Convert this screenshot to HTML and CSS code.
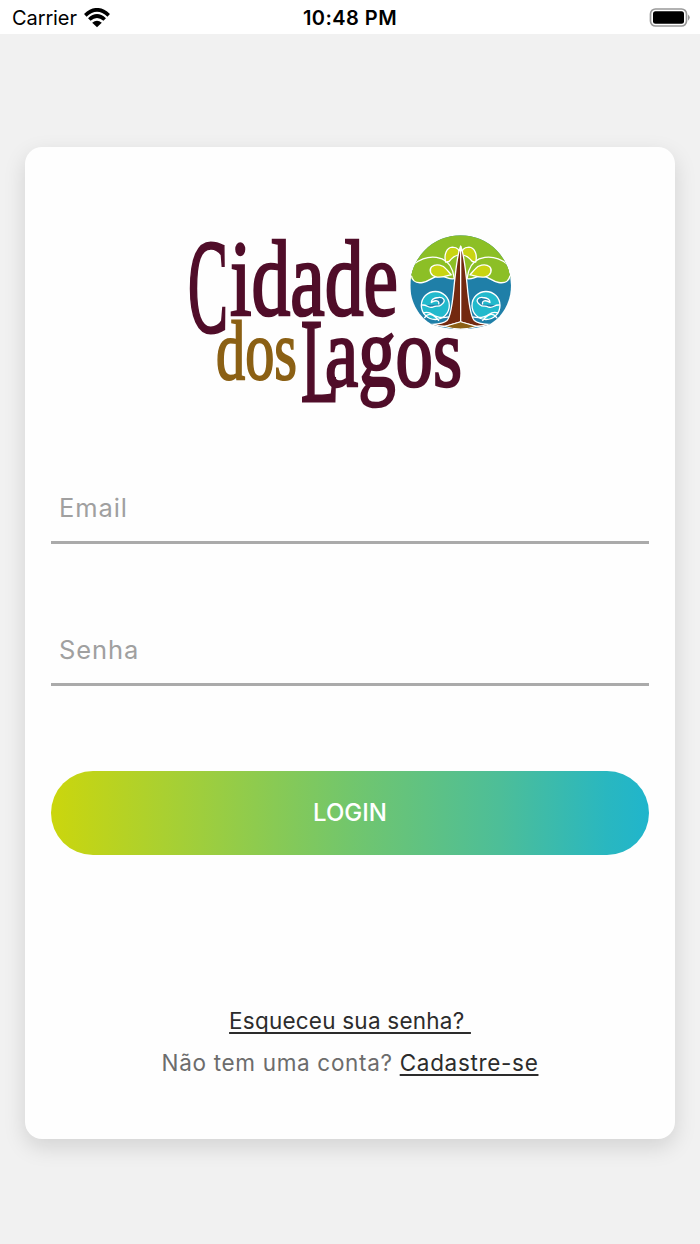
FILE: index.html
```
<!DOCTYPE html>
<html lang="pt-BR">
<head>
  <meta charset="UTF-8">
  <meta name="viewport" content="width=device-width, initial-scale=1.0">
  <title>Cidade dos Lagos - Login</title>
  <link rel="stylesheet" href="styles.css">
</head>
<body>
  <header class="status-bar">
    <div class="carrier">
      <span>Carrier</span>
      <svg class="wifi" viewBox="0 0 26 20">
        <g fill="none" stroke="#000" stroke-width="3.7">
          <path d="M1.3 7.3Q13-3.6 24.7 7.3"/>
          <path d="M5.3 11.5Q13 4.5 20.7 11.5"/>
        </g>
        <path d="M8.2 14.8Q13 10.6 17.8 14.8L13 19.3Z"/>
      </svg>
    </div>
    <div class="time">10:48 PM</div>
    <svg class="battery" viewBox="0 0 42 20">
      <rect x="1.5" y="1" width="36" height="17" rx="5" fill="none" stroke="#999" stroke-width="1.7"/>
      <rect x="4" y="3.3" width="31" height="12.4" rx="2.5"/>
      <path d="M39 6.5Q42.5 9.5 39 12.8Z" fill="#999"/>
    </svg>
  </header>

  <main class="card">
    <svg class="logo" viewBox="180 225 340 190" role="img" aria-label="Cidade dos Lagos">
      <g class="logo-text">
        <text class="logo-cap" x="188" y="332" font-size="134" textLength="40" lengthAdjust="spacingAndGlyphs">C</text>
        <text x="230" y="314.5" font-size="108" textLength="168" lengthAdjust="spacingAndGlyphs">idade</text>
        <text class="logo-dos" x="216" y="378.5" font-size="85" textLength="81" lengthAdjust="spacingAndGlyphs">dos</text>
        <text class="logo-cap" x="301" y="401" font-size="119" textLength="38" lengthAdjust="spacingAndGlyphs">L</text>
        <text x="325" y="385.5" font-size="100" textLength="137" lengthAdjust="spacingAndGlyphs">agos</text>
      </g>
      <g transform="translate(400 225.5) scale(.3333)">
        <clipPath id="badge">
          <path d="M31 180A151 151 0 0 1 333 180C333 232 306 276 268 297Q224 311 182 311Q140 311 96 297C58 276 31 232 31 180Z"/>
        </clipPath>
        <g clip-path="url(#badge)">
          <rect x="25" y="25" width="315" height="295" fill="#1f7fa8"/>
          <path d="M20 20H345V150H20Z" fill="#8cbf26"/>
          <g id="half" stroke="#fff" stroke-width="4" stroke-linejoin="round">
            <path d="M30 150C34 167 48 174 68 171C90 168 100 149 122 152C143 154 151 166 168 158L182 140V94C170 91 155 97 148 108C128 86 82 92 58 110C42 120 32 133 30 150Z" fill="#8cbf26" stroke="none"/>
            <path d="M34 150C37 167 50 174 68 171C90 168 100 149 122 152C143 154 151 166 168 158M42 116C83 84 142 87 158 137L163 160" fill="none"/>
            <path d="M137 110C131 87 140 66 157 65C174 65 180 75 179 90C168 87 156 97 147 108Z" fill="#c9d412"/>
            <path d="M154 148C140 150 124 158 108 154C91 150 86 133 95 124C109 112 131 121 138 130C145 138 149 142 154 148Z" fill="#c9d412"/>
            <circle cx="106" cy="240" r="42" fill="#22b9cc"/>
            <path d="M64 239C82 235 83 251 100 244C111 239 115 246 124 238C143 223 126 215 116 216C100 217 94 223 94 231C105 223 120 224 116 237" fill="#1f7fa8"/>
            <path d="M69 263C79 259 86 259 98 267C108 275 120 279 147 274M73 278C85 259 101 266 117 286" fill="none"/>
            <path d="M182 62C172 84 169 121 163 174C159 221 154 273 141 285C128 296 108 296 94 297C114 302 124 303 137 302L182 289Z" fill="#73290f"/>
          </g>
          <use href="#half" transform="matrix(-1 0 0 1 364 0)"/>
          <path d="M134 303L182 289L230 303Q182 318 134 303Z" fill="#8b6014" stroke="#fff" stroke-width="3"/>
        </g>
      </g>
    </svg>

    <form class="login-form">
      <input class="email" type="email" placeholder="Email">
      <input class="password" type="password" placeholder="Senha">
      <button type="button">LOGIN</button>
    </form>

    <div class="links">
      <p><a class="forgot" href="#">Esqueceu sua senha?&nbsp;</a></p>
      <p class="register"><span class="question">Não tem uma conta?</span> <a href="#">Cadastre-se</a></p>
    </div>
  </main>
</body>
</html>
```
FILE: styles.css
```
* {
  margin: 0;
  padding: 0;
  box-sizing: border-box;
}

body {
  height: 1244px;
  font-family: Inter, sans-serif;
  background: #f1f1f1;
  overflow: hidden;
}

.status-bar {
  display: grid;
  grid-template-columns: 1fr auto 1fr;
  align-items: center;
  height: 34px;
  padding: 2px 9px 0 12px;
  background: #fff;
  color: #000;
  font-size: 20px;
}

.carrier {
  display: flex;
  align-items: center;
  gap: 7px;
  letter-spacing: -0.1px;
}

.wifi {
  width: 26px;
  height: 20px;
}

.time {
  margin-right: 3px;
  font-weight: 600;
  letter-spacing: 0.45px;
}

.battery {
  width: 42px;
  height: 20px;
  justify-self: end;
}

.card {
  display: flex;
  flex-direction: column;
  height: 992px;
  margin: 113px 25px 0;
  padding: 78px 26px 0;
  background: #fefefe;
  border-radius: 17px;
  box-shadow: 0 8px 22px rgba(0, 0, 0, 0.13);
}

.logo {
  width: 340px;
  height: 190px;
  align-self: center;
}

.logo-text {
  font-family: "Liberation Serif", serif;
  fill: #500d29;
  stroke: #500d29;
  stroke-width: 2.6px;
}

.logo-cap {
  stroke-width: 3px;
}

.logo-dos {
  fill: #8b6014;
  stroke: #8b6014;
  stroke-width: 2px;
}

.login-form {
  display: flex;
  flex-direction: column;
  margin-top: 56px;
}

.login-form input {
  height: 73px;
  padding: 2px 8px 0;
  border: none;
  border-bottom: 3px solid #aaa;
  background: transparent;
  font-family: Inter, sans-serif;
  font-size: 25.5px;
  letter-spacing: 0.9px;
  outline: none;
}

.login-form .password {
  margin-top: 69px;
}

.login-form input::placeholder {
  color: #a0a0a0;
  opacity: 1;
}

.login-form button {
  height: 84px;
  margin-top: 85px;
  padding-bottom: 2px;
  border: none;
  border-radius: 42px;
  background: linear-gradient(to right, #cbd60d 0%, #72c66c 50%, #4dbe98 75%, #29b7c0 93%, #20b5cc 100%);
  color: #fff;
  font-family: Inter, sans-serif;
  font-size: 24px;
  font-weight: 500;
}

.links {
  margin-top: 145px;
  text-align: center;
  font-size: 22.5px;
  line-height: 42px;
  white-space: nowrap;
}

.links a {
  color: #2c2c2c;
  text-decoration-thickness: 1.5px;
  text-underline-offset: 3px;
  text-decoration-skip-ink: none;
}

.forgot {
  letter-spacing: 0.22px;
}

.register {
  letter-spacing: 0.68px;
}

.question {
  color: #6c6c6c;
}
```
